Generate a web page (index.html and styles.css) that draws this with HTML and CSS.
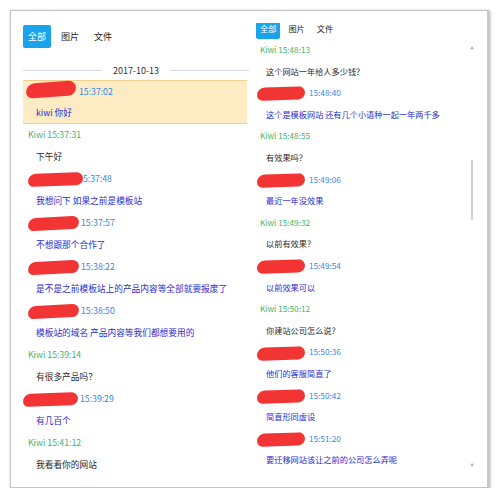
FILE: index.html
```html
<!DOCTYPE html>
<html lang="zh">
<head>
    <meta charset="UTF-8">
    <title>聊天记录</title>
    <link rel="stylesheet" href="styles.css">
</head>
<body>
    <div class="frame">
        <div class="left">
            <div class="tabs">
                <span class="tab active">全部</span>
                <span class="tab">图片</span>
                <span class="tab">文件</span>
            </div>
            <div class="date">2017-10-13</div>

            <div class="msg hl">
                <div class="meta"><span class="blot b1"></span><span class="time">15:37:02</span></div>
                <div class="text guest">kiwi 你好</div>
            </div>
            <div class="msg">
                <div class="meta kiwi">Kiwi 15:37:31</div>
                <div class="text">下午好</div>
            </div>
            <div class="msg">
                <div class="meta"><span class="blot b2"></span><span class="time">5:37:48</span></div>
                <div class="text guest">我想问下 如果之前是模板站</div>
            </div>
            <div class="msg">
                <div class="meta"><span class="blot b3"></span><span class="time">15:37:57</span></div>
                <div class="text guest">不想跟那个合作了</div>
            </div>
            <div class="msg">
                <div class="meta"><span class="blot b3"></span><span class="time">15:38:22</span></div>
                <div class="text guest">是不是之前模板站上的产品内容等全部就要报废了</div>
            </div>
            <div class="msg">
                <div class="meta"><span class="blot b3"></span><span class="time">15:38:50</span></div>
                <div class="text guest">模板站的域名 产品内容等我们都想要用的</div>
            </div>
            <div class="msg">
                <div class="meta kiwi">Kiwi 15:39:14</div>
                <div class="text">有很多产品吗？</div>
            </div>
            <div class="msg">
                <div class="meta"><span class="blot b4"></span><span class="time">15:39:29</span></div>
                <div class="text guest">有几百个</div>
            </div>
            <div class="msg">
                <div class="meta kiwi">Kiwi 15:41:12</div>
                <div class="text">我看看你的网站</div>
            </div>
        </div>

        <div class="right">
            <div class="view">
                <div class="tabs rtabs">
                    <span class="tab active">全部</span>
                    <span class="tab">图片</span>
                    <span class="tab">文件</span>
                </div>
                <span class="arrow up">▲</span>

                <div class="msg">
                    <div class="meta kiwi">Kiwi 15:48:13</div>
                    <div class="text">这个网站一年给人多少钱？</div>
                </div>
                <div class="msg">
                    <div class="meta"><span class="blot r1"></span><span class="time">15:48:40</span></div>
                    <div class="text guest">这个是模板网站 还有几个小语种一起一年两千多</div>
                </div>
                <div class="msg">
                    <div class="meta kiwi">Kiwi 15:48:55</div>
                    <div class="text">有效果吗？</div>
                </div>
                <div class="msg">
                    <div class="meta"><span class="blot r1"></span><span class="time">15:49:06</span></div>
                    <div class="text guest">最近一年没效果</div>
                </div>
                <div class="msg">
                    <div class="meta kiwi">Kiwi 15:49:32</div>
                    <div class="text">以前有效果？</div>
                </div>
                <div class="msg">
                    <div class="meta"><span class="blot r1"></span><span class="time">15:49:54</span></div>
                    <div class="text guest">以前效果可以</div>
                </div>
                <div class="msg">
                    <div class="meta kiwi">Kiwi 15:50:12</div>
                    <div class="text">你建站公司怎么说？</div>
                </div>
                <div class="msg">
                    <div class="meta"><span class="blot r1"></span><span class="time">15:50:36</span></div>
                    <div class="text guest">他们的客服简直了</div>
                </div>
                <div class="msg">
                    <div class="meta"><span class="blot r1"></span><span class="time">15:50:42</span></div>
                    <div class="text guest">简直形同虚设</div>
                </div>
                <div class="msg">
                    <div class="meta"><span class="blot r1"></span><span class="time">15:51:20</span></div>
                    <div class="text guest">要迁移网站该让之前的公司怎么弄呢</div>
                </div>

                <span class="scroll"></span>
                <span class="arrow down">▼</span>
            </div>
        </div>
    </div>
</body>
</html>
```

FILE: styles.css
```css
* {
    margin: 0;
    padding: 0;
    box-sizing: border-box;
}

body {
    background: white;
    font-family: "Noto Sans CJK SC", "Noto Sans", sans-serif;
    color: #2a2a2a;
}

.frame {
    display: flex;
    width: 479px;
    height: 478px;
    margin: 10px 0 0 10px;
    border: 1px solid #c4c4c4;
    border-right: 2px solid #c8c8c8;
    box-shadow: 1px 1px 3px rgba(0, 0, 0, 0.35);
    overflow: hidden;
    background: white;
}

/* left capture */
.left {
    width: 240px;
    padding: 14px 4px 0 12px;
    font-size: 8.7px;
}

.tabs {
    display: flex;
    gap: 5px;
    height: 23px;
}

.tab {
    padding: 0 5px;
    line-height: 23px;
    font-size: 9px;
    color: #222;
    border-radius: 2px;
}

.tab.active {
    background: #19a3ea;
    color: white;
}

.date {
    display: flex;
    align-items: center;
    gap: 11px;
    height: 20px;
    margin-top: 12px;
    font-size: 9px;
    color: #333;
}

.date::before, .date::after {
    content: "";
    flex: 1;
    height: 1px;
    background: #d0dbe8;
}

.date::after {
    margin-right: -2px;
}

.msg .meta, .msg .text {
    height: 22px;
    line-height: 22px;
    white-space: nowrap;
}

.meta {
    padding-left: 5px;
}

.text {
    padding-left: 13px;
}

.hl {
    background: #fdebc4;
    border-top: 1px solid #f2cf8c;
    border-bottom: 1px solid #f2cf8c;
}

.hl .meta, .hl .text {
    height: 21px;
    line-height: 21px;
}

.kiwi {
    color: #3cb468;
}

.time {
    color: #3088ee;
}

.guest {
    color: #2a2ad4;
}

/* redaction marks */
.blot {
    display: inline-block;
    vertical-align: middle;
    background: #f23434;
    border-radius: 9px 7px 8px 6px;
}

.b1 {
    width: 50px;
    height: 15px;
    margin: -6px 3px 0 -2px;
    transform: rotate(-4deg);
}

.b2 {
    width: 55px;
    height: 13px;
    transform: rotate(-2deg);
}

.b3 {
    width: 51px;
    height: 13px;
    margin: 0 2px 0 0;
    transform: rotate(-3deg);
}

.b4 {
    width: 55px;
    height: 13px;
    margin: 0 2px 0 -5px;
    transform: rotate(-2deg);
}

/* right capture */
.right {
    width: 235px;
    padding-top: 12px;
    font-size: 8.2px;
}

.view {
    position: relative;
    height: 465px;
    overflow: hidden;
}

.rtabs {
    gap: 4px;
    height: 22px;
    margin-top: -6px;
    padding-left: 5px;
}

.rtabs .tab {
    padding: 0 4px;
    line-height: 22px;
    font-size: 8.2px;
}

.right .meta, .right .text {
    height: 21.6px;
    line-height: 21.6px;
}

.right .meta {
    padding-left: 9px;
}

.right .text {
    padding-left: 15px;
}

.r1 {
    width: 48px;
    height: 13px;
    margin: 0 4px 0 -3px;
    transform: rotate(-2deg);
}

.scroll {
    position: absolute;
    top: 137px;
    right: 13px;
    width: 2px;
    height: 60px;
    background: #d2d2d2;
}

.arrow {
    position: absolute;
    right: 12px;
    font-size: 4px;
    color: #b8b8b8;
}

.arrow.up {
    top: 22px;
}

.arrow.down {
    bottom: 20px;
}
```
